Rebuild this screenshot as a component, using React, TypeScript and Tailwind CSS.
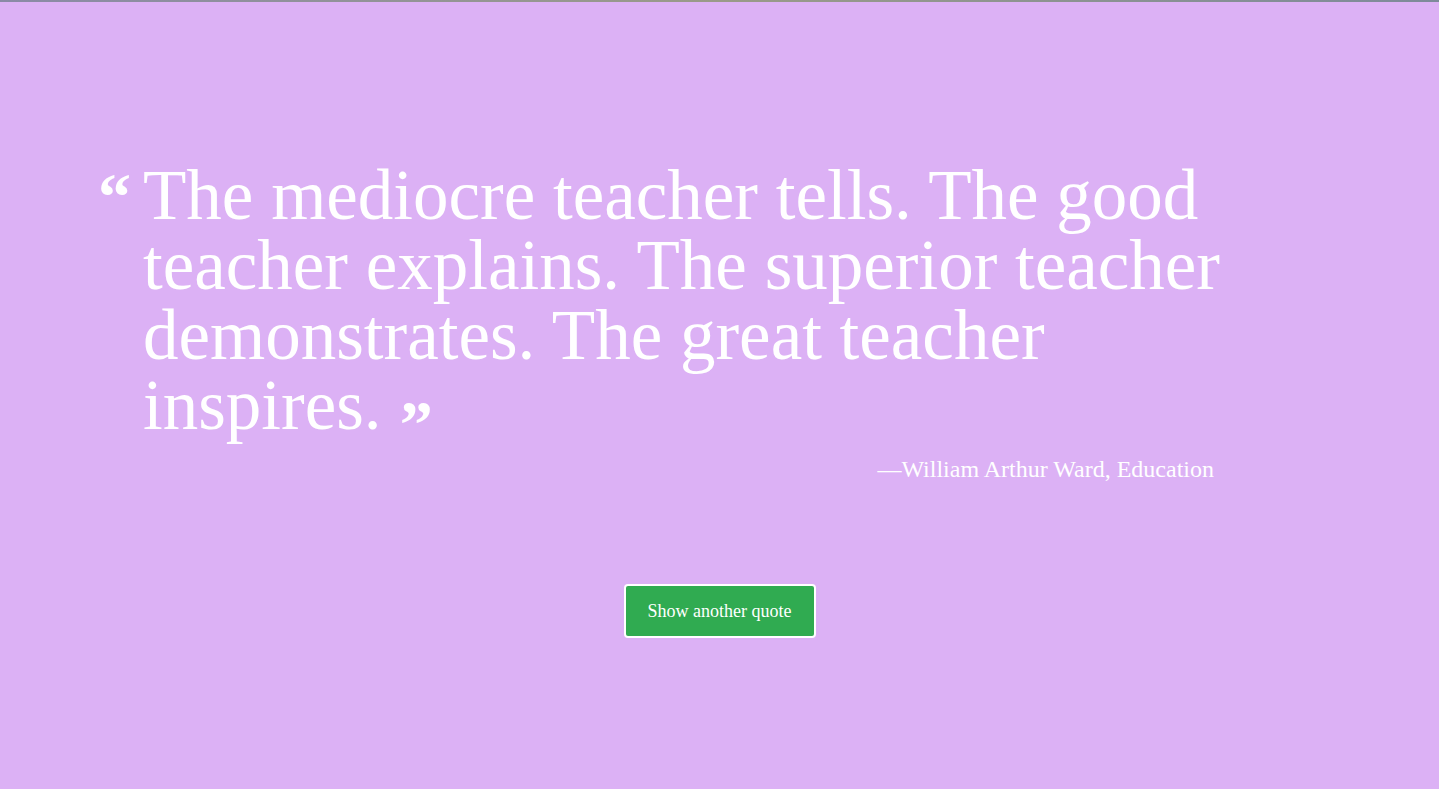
export default function App() {
  return (
    <div className="min-h-screen w-full bg-[#dcb1f5] flex flex-col" style={{ fontFamily: '"Liberation Serif", "DejaVu Serif", serif' }}>
      <div className="h-[2px] w-full bg-gradient-to-r from-[#8a8aa6] via-[#9a9a88] to-[#7e8a9a]" />
      <div className="pl-[98px] pt-[158px] w-[1260px]">
        <div className="flex items-start">
          <span className="text-white font-bold text-[66px] leading-none mt-[4px] w-[45px] shrink-0">“</span>
          <p className="text-white text-[71px] leading-[70px] whitespace-nowrap">
            The mediocre teacher tells. The good
            <br />
            teacher explains. The superior teacher
            <br />
            demonstrates. The great teacher
            <br />
            inspires.
            <span className="font-bold text-[66px] leading-none align-top ml-[18px] inline-block mt-[21px]">”</span>
          </p>
        </div>
        <p className="text-white text-[24px] text-right -mt-[6px] pr-[46px]">—William Arthur Ward, Education</p>
      </div>
      <div className="flex justify-center mt-[97px]">
        <button className="w-[192px] h-[54px] bg-[#30ab51] border-2 border-white rounded-[4px] text-white text-[18px]">
          Show another quote
        </button>
      </div>
    </div>
  );
}
